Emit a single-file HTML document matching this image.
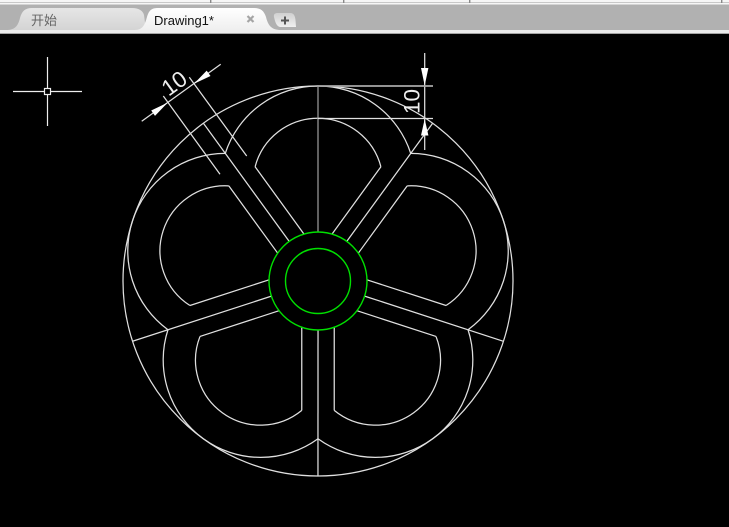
<!DOCTYPE html>
<html><head><meta charset="utf-8"><style>
html,body{margin:0;padding:0;background:#000;width:729px;height:527px;overflow:hidden}
svg{display:block}
</style></head><body>
<svg width="729" height="527" viewBox="0 0 729 527" xmlns="http://www.w3.org/2000/svg">
<defs>
<linearGradient id="t1" x1="0" y1="0" x2="0" y2="1"><stop offset="0" stop-color="#e6e6e6"/><stop offset="1" stop-color="#d4d4d4"/></linearGradient>
<linearGradient id="t2" x1="0" y1="0" x2="0" y2="1"><stop offset="0" stop-color="#ffffff"/><stop offset="1" stop-color="#efefef"/></linearGradient>
<linearGradient id="t3" x1="0" y1="0" x2="0" y2="1"><stop offset="0" stop-color="#d0d0d0"/><stop offset="1" stop-color="#f0f0f0"/></linearGradient>
</defs>
<rect x="0" y="0" width="729" height="527" fill="#000"/>
<!-- top strip -->
<rect x="0" y="0" width="729" height="5" fill="#f6f6f6"/>
<rect x="0" y="2" width="729" height="1" fill="#c8c8c8"/>
<rect x="210" y="0" width="1.4" height="3" fill="#888"/>
<rect x="343" y="0" width="1.4" height="3" fill="#888"/>
<rect x="469" y="0" width="1.4" height="3" fill="#888"/>
<rect x="721" y="0" width="1.4" height="3" fill="#888"/>
<rect x="0" y="4.500" width="729" height="26" fill="#b1b1b1"/>
<rect x="0" y="30" width="729" height="3.700" fill="#ebebeb"/>
<!-- tabs -->
<path d="M6,30 C15,30 18,26 20,18 C22,11 25,8 32,8 L132,8 C139,8 143,11 144,15 L146,30 Z" fill="url(#t1)"/>
<path d="M135,30 C143,30 145,24 147,17 C149,10 152,8 158,8 L254,8 C261,8 264,11 266,17 C268,25 271,30 281,30 Z" fill="url(#t2)"/>
<path d="M280,27 C276,26 275,21 274,17 C273.500,14 275,13 278,13 L290,13 C294,13 295,16 295.500,20 L296,27 Z" fill="url(#t3)"/>
<text x="31" y="25" font-family="'Liberation Sans','Noto Sans CJK SC',sans-serif" font-size="13" fill="#666">开始</text>
<text x="154" y="25" font-family="'Liberation Sans',sans-serif" font-size="13" fill="#111">Drawing1*</text>
<path d="M247.500,16 L253.500,22 M253.500,16 L247.500,22" stroke="#a5a5a5" stroke-width="2.200" fill="none"/>
<path d="M281,20.500 H289 M285,16.500 V24.500" stroke="#555" stroke-width="2" fill="none"/>

<!-- crosshair -->
<g stroke="#eee" stroke-width="1.200" fill="none">
<path d="M13,91.500 H44 M51,91.500 H82 M47.500,57 V88 M47.500,95 V126"/>
<rect x="44.500" y="88.500" width="6" height="6"/>
</g>

<!-- drawing -->
<g fill="none" stroke="#e0e0e0" stroke-width="1.250">
<circle cx="318" cy="281" r="195"/>
<g id="u">
<path d="M225.270,153.370 A97.500,97.500 0 0 1 410.730,153.370"/>
<path d="M255.100,166.800 A65,65 0 0 1 380.900,166.800"/>
<path d="M255.100,166.800 L304,234.100 M380.900,166.800 L332,234.100"/>
<path d="M203.400,123.200 L289.200,241.400"/>
</g>
<use href="#u" transform="rotate(72 318 281)"/>
<use href="#u" transform="rotate(144 318 281)"/>
<use href="#u" transform="rotate(216 318 281)"/>
<use href="#u" transform="rotate(288 318 281)"/>
<path d="M318,86 V232" stroke="#9a9a9a"/>
<!-- dim left -->
<path d="M141.700,121.300 L220.700,64.300"/>
<path d="M163.300,96 L220,174.300"/>
<path d="M189.300,77.300 L246.700,156"/>
<!-- dim right -->
<path d="M424.700,53 V150"/>
<path d="M318,86 H433" stroke="#a8a8a8" stroke-width="1.800"/>
<path d="M318,118.500 H433"/>
</g>
<g fill="#fff">
<path d="M167.700,102.600 L155,115.900 L151.200,110.500 Z"/>
<path d="M194,83.700 L210.500,76 L206.700,70.600 Z"/>
<path d="M424.700,85.500 L421,68 L428.400,68 Z"/>
<path d="M424.700,119 L421,135.500 L428.400,135.500 Z"/>
</g>
<text transform="translate(174 83) rotate(-36)" x="0" y="8" text-anchor="middle" font-family="'Liberation Sans',sans-serif" font-size="22.500" fill="#eee">10</text>
<text transform="translate(411.500 101.500) rotate(-90)" x="0" y="8" text-anchor="middle" font-family="'Liberation Sans',sans-serif" font-size="22.500" fill="#eee">10</text>

<!-- hub -->
<g fill="none" stroke="#00e000" stroke-width="1.400">
<circle cx="318" cy="281" r="49"/>
<circle cx="318" cy="281" r="32.500"/>
</g>
</svg>
</body></html>
